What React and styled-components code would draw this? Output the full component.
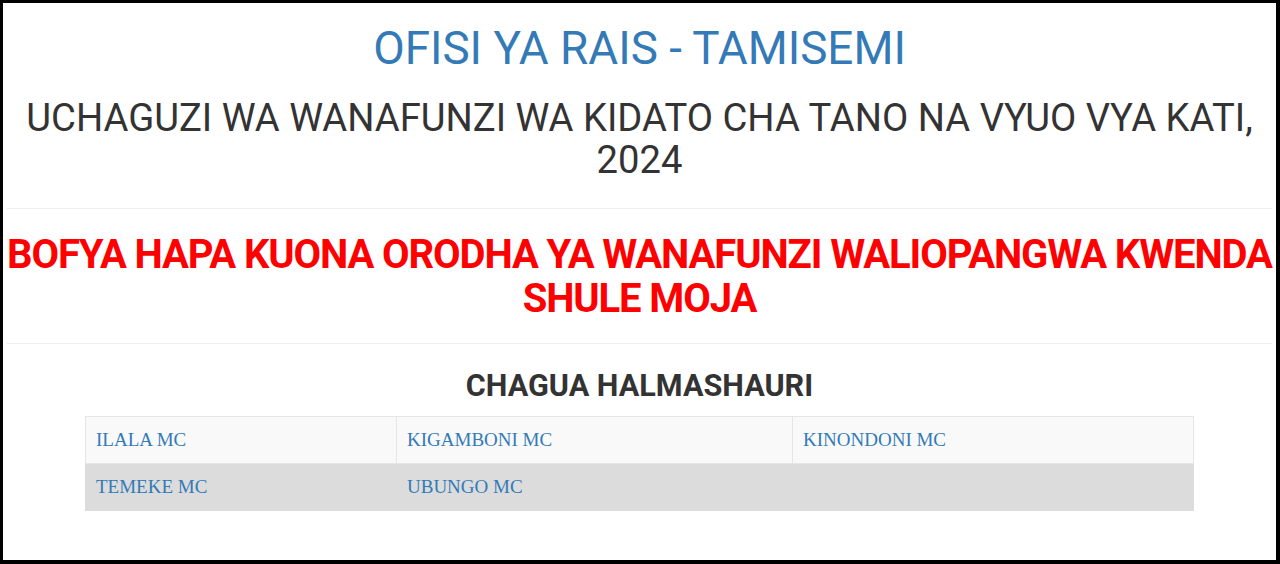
import React from "react";
import styled, { createGlobalStyle } from "styled-components";

const Global = createGlobalStyle`
  html, body {
    margin: 0;
    padding: 0;
    background: #000;
  }
  body {
    font-family: Roboto, "Liberation Sans", sans-serif;
    color: #333;
  }
`;

const Frame = styled.div`
  box-sizing: border-box;
  width: 1280px;
  height: 564px;
  border: 3px solid #000;
  border-right-width: 4px;
  border-bottom-width: 4px;
  background: #fff;
  overflow: hidden;
  padding: 0 4px;
`;

const Title = styled.h1`
  margin: 21px 0 0;
  font-size: 45.8px;
  font-weight: 400;
  line-height: 1.1;
  text-align: center;
  color: #337ab7;
`;

const SubTitle = styled.h2`
  margin: 23px 0 0;
  font-size: 38.2px;
  font-weight: 400;
  line-height: 1.1;
  text-align: center;
  color: #333;
`;

const Rule = styled.hr`
  margin: ${(p) => p.$top}px 0 0;
  border: 0;
  border-top: 1px solid #eee;
`;

const Notice = styled.a`
  display: block;
  margin-top: 24px;
  font-size: 40px;
  font-weight: 700;
  line-height: 44px;
  letter-spacing: -1.1px;
  white-space: nowrap;
  text-align: center;
  color: #f00;
  text-decoration: none;
`;

const Heading = styled.h3`
  margin: 25px 0 0;
  font-size: 30.6px;
  font-weight: 700;
  line-height: 1.1;
  text-align: center;
  color: #333;
`;

const Table = styled.table`
  margin: 13px auto 0;
  width: 1109px;
  border-collapse: collapse;
  table-layout: fixed;
  font-family: "Liberation Serif", "Times New Roman", serif;
  font-size: 19px;
`;

const Row = styled.tr`
  background: ${(p) => (p.$shade ? "#dcdcdc" : "#f9f9f9")};
`;

const Cell = styled.td`
  height: 46px;
  padding: 0 10px;
  border: 1px solid ${(p) => (p.$shade ? "#dcdcdc" : "#e6e6e6")};
  vertical-align: middle;
`;

const Link = styled.a`
  color: #337ab7;
  text-decoration: none;
`;

const rows = [
  ["ILALA MC", "KIGAMBONI MC", "KINONDONI MC"],
  ["TEMEKE MC", "UBUNGO MC", ""],
];

export default function App() {
  return (
    <>
      <Global />
      <Frame>
        <Title>OFISI YA RAIS - TAMISEMI</Title>
        <SubTitle>
          UCHAGUZI WA WANAFUNZI WA KIDATO CHA TANO NA VYUO VYA KATI, 2024
        </SubTitle>
        <Rule $top={27} />
        <Notice href="#">
          BOFYA HAPA KUONA ORODHA YA WANAFUNZI WALIOPANGWA KWENDA
          <br />
          SHULE MOJA
        </Notice>
        <Rule $top={22} />
        <Heading>CHAGUA HALMASHAURI</Heading>
        <Table>
          <colgroup>
            <col style={{ width: "311px" }} />
            <col style={{ width: "396px" }} />
            <col />
          </colgroup>
          <tbody>
            {rows.map((r, i) => (
              <Row key={i} $shade={i % 2 === 1}>
                {r.map((c, j) => (
                  <Cell key={j} $shade={i % 2 === 1}>
                    {c && <Link href="#">{c}</Link>}
                  </Cell>
                ))}
              </Row>
            ))}
          </tbody>
        </Table>
      </Frame>
    </>
  );
}
